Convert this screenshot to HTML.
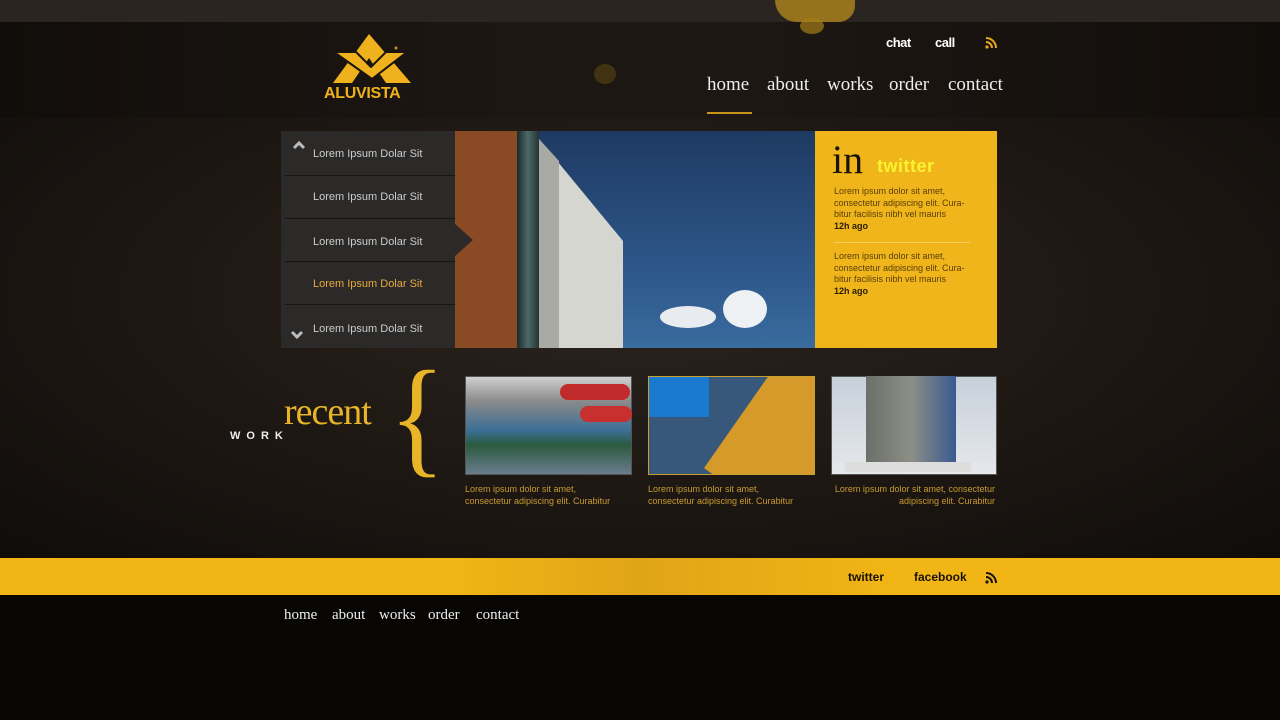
<!DOCTYPE html>
<html><head><meta charset="utf-8"><style>
*{margin:0;padding:0;box-sizing:border-box}
body{width:1280px;height:720px;overflow:hidden;background:#070605;font-family:"Liberation Sans",sans-serif;position:relative}
.a{position:absolute}
.serif{font-family:"Liberation Serif",serif}
.n{position:absolute;font-family:"Liberation Serif",serif;font-size:19px;color:#eee;top:74px}
.f{position:absolute;font-family:"Liberation Serif",serif;font-size:15px;color:#eee;top:607px}
</style></head><body>
<div class="a" style="left:0;top:0;width:1280px;height:22px;background:#2a2520"></div>
<div class="a" style="left:0;top:22px;width:1280px;height:96px;background:linear-gradient(90deg,#110d0a,#1d1713 40%,#1d1713 60%,#110d0a)"></div>
<div class="a" style="left:0;top:118px;width:1280px;height:440px;background:radial-gradient(ellipse at 50% 40%,#2b231d 0%,#1c1612 60%,#0f0c0a 100%)"></div>
<div class="a" style="left:775px;top:0;width:80px;height:22px;background:#b98c1c;border-radius:0 0 30px 40px;opacity:.75"></div>
<div class="a" style="left:800px;top:18px;width:24px;height:16px;background:#a67e18;border-radius:50%;opacity:.7"></div>
<div class="a" style="left:594px;top:64px;width:22px;height:20px;background:#5a4512;border-radius:50%;opacity:.6"></div>
<!-- logo -->
<svg class="a" style="left:318px;top:28px" width="106" height="60" viewBox="318 28 106 60">
<polygon points="369,34 333,83 352,83 369,58 386,83 411,83" fill="#f0b21c"/>
<polygon points="334,52 356,52 371,67 386,52 407,52 372,79" fill="#f0b21c" stroke="#1a1511" stroke-width="2" stroke-linejoin="round"/>
<circle cx="396" cy="48" r="1.5" fill="#c9951a"/>
</svg>
<div class="a" style="left:324px;top:85px;font-size:16px;font-weight:bold;color:#f0b21c;letter-spacing:-.3px">ALUVISTA</div>
<div class="a" style="left:886px;top:35px;font-size:13px;font-weight:bold;color:#fff;letter-spacing:-.5px">chat</div>
<div class="a" style="left:935px;top:35px;font-size:13px;font-weight:bold;color:#fff;letter-spacing:-.5px">call</div>
<svg class="a" style="left:985px;top:37px" width="12" height="12" viewBox="0 0 12 12"><circle cx="2" cy="10" r="1.6" fill="#e8a81c"/><path d="M1 5a6 6 0 0 1 6 6M1 1a10 10 0 0 1 10 10" stroke="#e8a81c" stroke-width="2" fill="none"/></svg>
<span class="n" style="left:707px">home</span><span class="n" style="left:767px">about</span><span class="n" style="left:827px">works</span><span class="n" style="left:889px">order</span><span class="n" style="left:948px">contact</span>
<div class="a" style="left:707px;top:112px;width:45px;height:2px;background:#c8951c"></div>
<!-- slider -->
<div class="a" style="left:281px;top:131px;width:174px;height:217px;background:#2b2a29"></div>
<div class="a" style="left:313px;top:148px;font-size:11px;color:#ccc">Lorem Ipsum Dolar Sit</div>
<div class="a" style="left:285px;top:175px;width:170px;height:1px;background:#161515"></div>
<div class="a" style="left:313px;top:191px;font-size:11px;color:#ccc">Lorem Ipsum Dolar Sit</div>
<div class="a" style="left:285px;top:218px;width:170px;height:1px;background:#161515"></div>
<div class="a" style="left:313px;top:236px;font-size:11px;color:#ccc">Lorem Ipsum Dolar Sit</div>
<div class="a" style="left:285px;top:261px;width:170px;height:1px;background:#161515"></div>
<div class="a" style="left:313px;top:278px;font-size:11px;color:#e9a93a">Lorem Ipsum Dolar Sit</div>
<div class="a" style="left:285px;top:304px;width:170px;height:1px;background:#161515"></div>
<div class="a" style="left:313px;top:323px;font-size:11px;color:#ccc">Lorem Ipsum Dolar Sit</div>
<svg class="a" style="left:292px;top:140px" width="14" height="10"><polyline points="2,8 7,3 12,8" stroke="#bbb" stroke-width="3" fill="none"/></svg>
<svg class="a" style="left:290px;top:330px" width="14" height="10"><polyline points="2,2 7,7 12,2" stroke="#bbb" stroke-width="3" fill="none"/></svg>
<div class="a" style="left:455px;top:131px;width:360px;height:217px;background:linear-gradient(180deg,#1e3a62,#2f5a8e 70%,#3a6c9e)"></div>
<div class="a" style="left:455px;top:131px;width:62px;height:217px;background:#8a4a24"></div>
<div class="a" style="left:517px;top:131px;width:22px;height:217px;background:linear-gradient(90deg,#1c2a2b,#4b6a68,#243434)"></div>
<svg class="a" style="left:539px;top:131px" width="84" height="217"><polygon points="0,8 84,110 84,217 0,217" fill="#d6d6d0"/><polygon points="0,8 20,30 20,217 0,217" fill="#a9aaa4"/></svg>
<div class="a" style="left:455px;top:224px;border-left:18px solid #2b2a29;border-top:16px solid transparent;border-bottom:16px solid transparent"></div>
<div class="a" style="left:660px;top:306px;width:56px;height:22px;background:#e8ecf0;border-radius:50%"></div>
<div class="a" style="left:723px;top:290px;width:44px;height:38px;background:#eef1f4;border-radius:50%"></div>
<div class="a" style="left:815px;top:131px;width:182px;height:217px;background:#efb51a"></div>
<div class="a serif" style="left:832px;top:138px;font-size:40px;color:#1a1308;line-height:44px">in</div>
<div class="a" style="left:877px;top:156px;font-size:18px;font-weight:bold;color:#fbf230;letter-spacing:.5px">twitter</div>
<div class="a" style="left:834px;top:186px;font-size:9px;line-height:11.5px;color:#5a3e08;width:140px">Lorem ipsum dolor sit amet, consectetur adipiscing elit. Cura-bitur facilisis nibh vel mauris<br><b style="color:#2a1c04">12h ago</b></div>
<div class="a" style="left:834px;top:242px;width:136px;height:1px;background:#f5cf5a"></div>
<div class="a" style="left:834px;top:251px;font-size:9px;line-height:11.5px;color:#5a3e08;width:140px">Lorem ipsum dolor sit amet, consectetur adipiscing elit. Cura-bitur facilisis nibh vel mauris<br><b style="color:#2a1c04">12h ago</b></div>
<!-- recent -->
<div class="a serif" style="left:284px;top:390px;font-size:38px;color:#e8b428;letter-spacing:-1px">recent</div>
<div class="a" style="left:230px;top:430px;font-size:11px;font-weight:bold;color:#eee;letter-spacing:6px">WORK</div>
<div class="a serif" style="left:386px;top:352px;font-size:130px;color:#e8b428;line-height:130px;transform:scaleX(.9)">{</div>
<div class="a" style="left:465px;top:376px;width:167px;height:99px;background:linear-gradient(180deg,#cfcfcf 0%,#8a8a8a 25%,#3c6f96 55%,#2b5a40 70%,#6a7c8c 100%);border:1px solid #555"></div>
<div class="a" style="left:560px;top:384px;width:70px;height:16px;background:#c02a2a;border-radius:8px"></div>
<div class="a" style="left:580px;top:406px;width:52px;height:16px;background:#c83030;border-radius:8px"></div>
<div class="a" style="left:648px;top:376px;width:167px;height:99px;background:#37587a;border:1px solid #c8a030;overflow:hidden"><div style="position:absolute;left:0;top:0;width:60px;height:40px;background:#1a7ad0"></div><div style="position:absolute;left:90px;top:-20px;width:120px;height:160px;background:#d59a2a;transform:rotate(35deg)"></div></div>
<div class="a" style="left:831px;top:376px;width:166px;height:99px;background:linear-gradient(180deg,#c7d0da,#e5e8eb);border:1px solid #555"></div>
<div class="a" style="left:866px;top:376px;width:90px;height:92px;background:linear-gradient(90deg,#6c6f6a,#8c8f86 50%,#3a5a90)"></div>
<div class="a" style="left:845px;top:462px;width:126px;height:10px;background:#ddd"></div>
<div class="a" style="left:465px;top:483px;font-size:9px;line-height:12px;color:#c99a30;width:170px">Lorem ipsum dolor sit amet,<br>consectetur adipiscing elit. Curabitur</div>
<div class="a" style="left:648px;top:483px;font-size:9px;line-height:12px;color:#c99a30;width:170px">Lorem ipsum dolor sit amet,<br>consectetur adipiscing elit. Curabitur</div>
<div class="a" style="left:827px;top:483px;font-size:9px;line-height:12px;color:#c99a30;width:168px;text-align:right">Lorem ipsum dolor sit amet, consectetur<br>adipiscing elit. Curabitur</div>
<!-- footer -->
<div class="a" style="left:0;top:558px;width:1280px;height:37px;background:linear-gradient(90deg,#f1b515,#f1b515 35%,#e0a418 50%,#f1b515 70%)"></div>
<div class="a" style="left:848px;top:570px;font-size:12px;font-weight:bold;color:#1a1205">twitter</div>
<div class="a" style="left:914px;top:570px;font-size:12px;font-weight:bold;color:#1a1205">facebook</div>
<svg class="a" style="left:985px;top:572px" width="12" height="12" viewBox="0 0 12 12"><circle cx="2" cy="10" r="1.6" fill="#1a1205"/><path d="M1 5a6 6 0 0 1 6 6M1 1a10 10 0 0 1 10 10" stroke="#1a1205" stroke-width="2" fill="none"/></svg>
<span class="f" style="left:284px">home</span><span class="f" style="left:332px">about</span><span class="f" style="left:379px">works</span><span class="f" style="left:428px">order</span><span class="f" style="left:476px">contact</span>
</body></html>
